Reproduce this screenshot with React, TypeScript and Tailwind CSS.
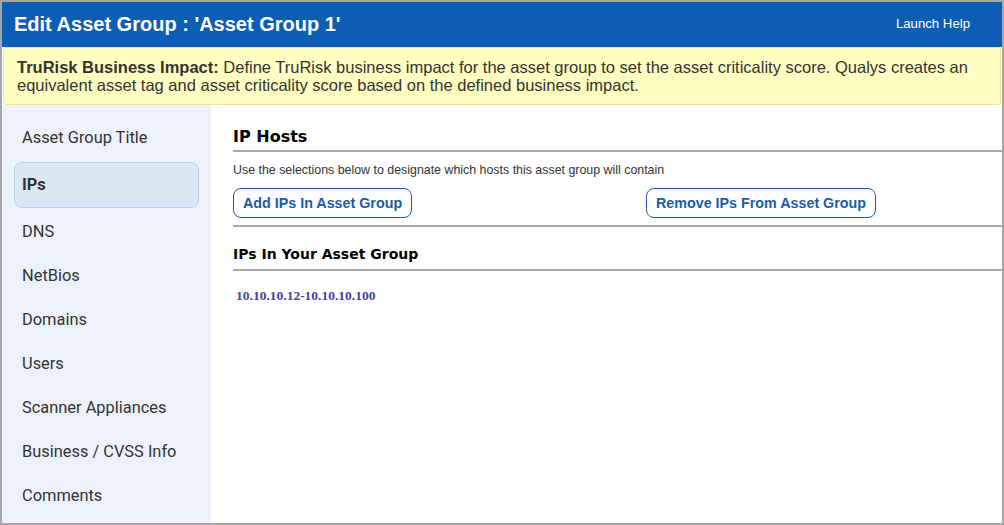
import React from "react";

const items = [
  "Asset Group Title",
  "IPs",
  "DNS",
  "NetBios",
  "Domains",
  "Users",
  "Scanner Appliances",
  "Business / CVSS Info",
  "Comments",
];

export default function App() {
  return (
    <div className="w-[1004px] h-[525px] border-2 border-[#a6a6a6] bg-white flex flex-col overflow-hidden font-['Liberation_Sans',Arial,sans-serif]">
      <div className="h-[45px] shrink-0 bg-[#0b5eb3] flex items-center justify-between pl-[12px] pr-[32px] pb-[2px]">
        <div className="text-white font-bold text-[20px] leading-none">Edit Asset Group : 'Asset Group 1'</div>
        <div className="text-white text-[13.2px] leading-none">Launch Help</div>
      </div>
      <div className="shrink-0 mx-[1px] h-[58px] bg-[#ffffc2] border border-[#ece28f] rounded-[3px] pl-[13px] pr-[10px] pt-[10px] text-[16.5px] leading-[18px] text-[#333]">
        <span className="font-bold">TruRisk Business Impact:</span> Define TruRisk business impact for the asset group to set the asset criticality score. Qualys creates an equivalent asset tag and asset criticality score based on the defined business impact.
      </div>
      <div className="flex-1 flex min-h-0">
        <div className="w-[209px] shrink-0 bg-[#edf2fa] px-[12px] pt-[11px] flex flex-col font-['Roboto',sans-serif] text-[16.4px] text-[#333]">
          {items.map((it) => {
            const sel = it === "IPs";
            return (
              <div
                key={it}
                className={
                  sel
                    ? "h-[46px] my-[2px] shrink-0 flex items-center pl-[7px] rounded-[8px] border border-[#bad2ec] bg-[#dae7f5] font-bold"
                    : "h-[44px] shrink-0 flex items-center pl-[8px]"
                }
              >
                {it}
              </div>
            );
          })}
        </div>
        <div className="flex-1 pl-[22px] pt-[22px] flex flex-col">
          <div className="font-['DejaVu_Sans',Verdana,sans-serif] font-bold text-[16px] leading-[20px] text-black">IP Hosts</div>
          <div className="h-[2px] bg-[#a8a8a8] mt-[3px]"></div>
          <div className="mt-[10px] text-[12.4px] leading-[16px] text-[#333]">
            Use the selections below to designate which hosts this asset group will contain
          </div>
          <div className="mt-[10px] grid grid-cols-[413px_1fr]">
            <div>
              <button className="h-[30px] px-[9px] rounded-[8px] border border-[#1a5ea8] bg-white text-[#1a5ca8] font-bold text-[14.3px] leading-none">
                Add IPs In Asset Group
              </button>
            </div>
            <div>
              <button className="h-[30px] px-[9px] rounded-[8px] border border-[#1a5ea8] bg-white text-[#1a5ca8] font-bold text-[14.3px] leading-none">
                Remove IPs From Asset Group
              </button>
            </div>
          </div>
          <div className="h-[2px] bg-[#a8a8a8] mt-[7px]"></div>
          <div className="mt-[18px] font-['DejaVu_Sans',Verdana,sans-serif] font-bold text-[14px] leading-[18px] text-black">IPs In Your Asset Group</div>
          <div className="h-[2px] bg-[#a8a8a8] mt-[6px]"></div>
          <div className="mt-[17px] ml-[3px] font-['Liberation_Serif','Times_New_Roman',serif] font-bold text-[13.5px] leading-[16px] text-[#4a3f9e]">
            10.10.10.12-10.10.10.100
          </div>
        </div>
      </div>
    </div>
  );
}
